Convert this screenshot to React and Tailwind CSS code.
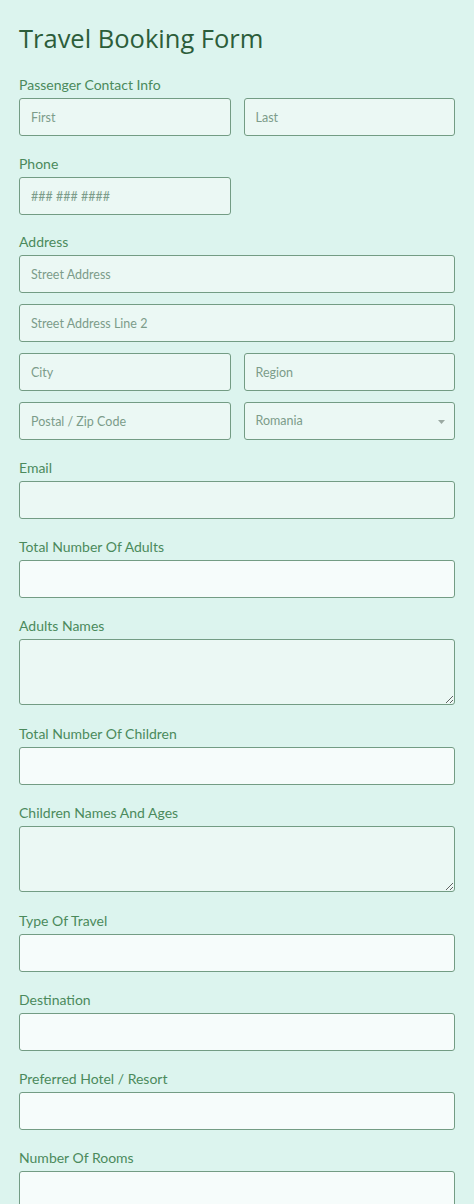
const labelCls = 'block text-[14px] leading-[18px] text-[#4b8a5c] mb-1';
const tinted = 'bg-[#ebf8f4]';
const white = 'bg-[#f6fcfb]';
const inputBase =
  'block w-full h-[38px] rounded-[3px] border border-[#739c84] px-[11px] text-[12.5px] text-[#3c6b4c] placeholder:text-[#7c9c8a] outline-none';

function Input({ placeholder = '', light = false }) {
  return <input type="text" placeholder={placeholder} className={`${inputBase} ${light ? white : tinted}`} />;
}

function Field({ label, children, className = '' }) {
  return (
    <div className={className}>
      <label className={labelCls}>{label}</label>
      {children}
    </div>
  );
}

function TextArea() {
  return (
    <textarea
      className={`block w-full h-[66px] rounded-[3px] border border-[#739c84] px-3 py-2 text-[12px] ${tinted} outline-none`}
    />
  );
}

export default function App() {
  return (
    <div
      className="min-h-[1204px] bg-[#dcf4ee] px-[19px] pt-[21px]"
      style={{ fontFamily: 'Lato, "Open Sans", sans-serif' }}
    >
      <h1
        className="text-[25.5px] leading-[34px] text-[#2c5d3a] mb-[21px]"
        style={{ fontFamily: '"Open Sans", sans-serif' }}
      >
        Travel Booking Form
      </h1>

      <div className="flex flex-col gap-[19px]">
        <Field label="Passenger Contact Info">
          <div className="grid grid-cols-2 gap-[13px]">
            <Input placeholder="First" />
            <Input placeholder="Last" />
          </div>
        </Field>

        <Field label="Phone">
          <div className="grid grid-cols-2 gap-[13px]">
            <Input placeholder="### ### ####" />
          </div>
        </Field>

        <Field label="Address" className="-mt-[1px]">
          <div className="flex flex-col gap-[11px]">
            <Input placeholder="Street Address" />
            <Input placeholder="Street Address Line 2" />
            <div className="grid grid-cols-2 gap-[13px]">
              <Input placeholder="City" />
              <Input placeholder="Region" />
            </div>
            <div className="grid grid-cols-2 gap-[13px]">
              <Input placeholder="Postal / Zip Code" />
              <div className={`relative flex h-[38px] items-center rounded-[3px] border border-[#739c84] px-[11px] ${tinted}`}>
                <span className="text-[12.5px] text-[#7c9c8a]">Romania</span>
                <svg className="absolute right-[9px] top-[17px] h-[4px] w-[7px]" viewBox="0 0 7 4">
                  <path d="M0 0h7L3.5 4z" fill="#9aa9a2" />
                </svg>
              </div>
            </div>
          </div>
        </Field>

        <Field label="Email">
          <Input />
        </Field>

        <Field label="Total Number Of Adults">
          <Input light />
        </Field>

        <Field label="Adults Names">
          <TextArea />
        </Field>

        <Field label="Total Number Of Children" className="mt-[1px]">
          <Input light />
        </Field>

        <Field label="Children Names And Ages">
          <TextArea />
        </Field>

        <Field label="Type Of Travel" className="mt-[1px]">
          <Input light />
        </Field>

        <Field label="Destination">
          <Input light />
        </Field>

        <Field label="Preferred Hotel / Resort">
          <Input light />
        </Field>

        <Field label="Number Of Rooms">
          <Input light />
        </Field>
      </div>
    </div>
  );
}
